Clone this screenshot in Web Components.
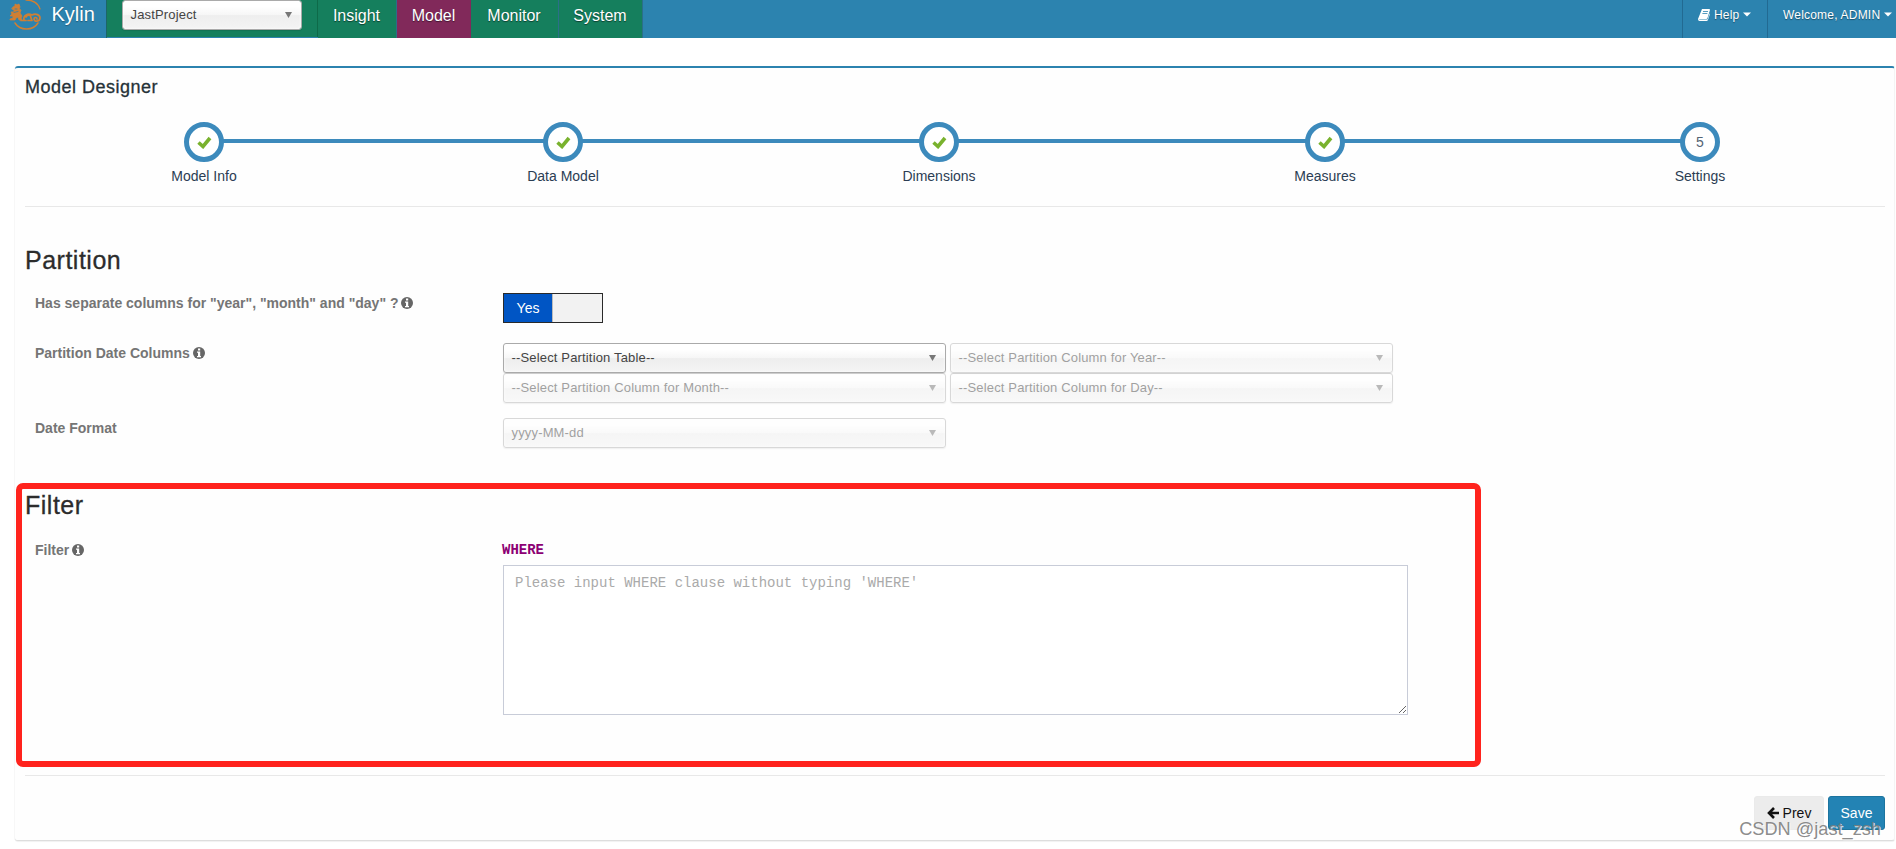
<!DOCTYPE html>
<html lang="en">
<head>
<meta charset="utf-8">
<title>Kylin</title>
<style>
body {
  margin: 0;
  background: #fff;
  font: 14px/20px "Liberation Sans", Arial, sans-serif;
  color: #2c2c2c;
}
</style>
</head>
<body>
<kylin-app></kylin-app>
<script>
const define = (name, html, setup) => {
  const template = document.createElement('template');
  template.innerHTML = html;
  customElements.define(name, class extends HTMLElement {
    constructor() {
      super();
      this.attachShadow({mode: 'open'});
      this.shadowRoot.appendChild(template.content.cloneNode(true));
    }
    connectedCallback() {
      if (setup) setup(this, this.shadowRoot);
    }
  });
};

define('kylin-logo', `
<style>
:host { display: block; width: 35px; height: 32px; }
svg { display: block; }
</style>
<svg width="35" height="32" viewBox="0 0 35 32" fill="none" stroke="#d07f33" stroke-linecap="round" stroke-linejoin="round">
  <path d="M18 0c7 0 12 3 14 9" stroke-width="1.300"/>
  <path d="M7 23c5 8 18 8 23 0" stroke-width="1.500"/>
  <path d="M5 7l2-1 0-2 2 1 2-1 1 3-1 2 2 1-1 3 2 3-1 2 1 2h-3l-1-3-2 1-1 2-5 0 0-1 3-1 0-2-3 0 2-2-1-2 3 0 0-2-2-1z" fill="#d07f33" stroke-width=".8"/>
  <path d="M6 12.500l4-1M7 9h2" stroke="#2c83af" stroke-width=".8"/>
  <path d="M13 20.500h5M16 20c-1-5 4-7 8-5 4-2 8 0 8 3 0 4-6 4-6 1 0-2 3-2 3 0M18 17c2-3 5-2 5 1l1 2.500h-4" stroke-width="1.700"/>
</svg>`);

define('kylin-select', `
<style>
:host {
  display: flex;
  align-items: center;
  box-sizing: border-box;
  height: 30px;
  padding: 0 7px 0 7.500px;
  border: 1px solid #aaa;
  border-radius: 3px;
  background: linear-gradient(#fff 20%, #f6f6f6 50%, #eee 52%, #f4f4f4 100%);
  background-clip: padding-box;
  box-shadow: 0 0 3px #fff inset, 0 1px 1px rgba(0, 0, 0, .1);
  font-size: 13px;
  letter-spacing: .16px;
  color: #444;
}
:host([disabled]) { opacity: .5; border-color: #b4b4b4; }
span { flex: 1; }
svg { display: block; margin-right: 1px; }
</style>
<span><slot></slot></span>
<svg width="9" height="8"><path d="M1 1h7L4.500 7z" fill="#777"/></svg>`);

define('nav-tab', `
<style>
:host {
  display: block;
  box-sizing: border-box;
  height: 38px;
  padding-right: 1px;
  background: #157f5d;
  border-right: 1px solid #2b6f88;
  color: #fff;
  font-size: 16px;
  line-height: 31px;
  text-align: center;
  text-shadow: 0 1px 1px rgba(0, 0, 0, .5);
}
:host([active]) { background: #81295a; border-color: #81295a; padding-right: 0; }
</style>
<slot></slot>`);

define('nav-menu', `
<style>
:host {
  display: flex;
  align-items: center;
  box-sizing: border-box;
  height: 38px;
  padding: 0 0 9px 15px;
  border-left: 1px solid #226a92;
  color: #fff;
  font-size: 12px;
  letter-spacing: .2px;
  white-space: nowrap;
  text-shadow: 0 1px 1px rgba(0, 0, 0, .4);
}
svg { margin-left: 4px; flex: none; }
</style>
<slot name="icon"></slot><slot></slot>
<svg width="8" height="5"><path d="M0 .500h8L4 4.500z" fill="#fff"/></svg>`);

define('kylin-navbar', `
<style>
:host { display: flex; height: 38px; background: #2c83af; }
.brand {
  display: flex;
  box-sizing: border-box;
  width: 107px;
  padding-left: 8px;
  gap: 8.500px;
  border-right: 1px solid #1c6666;
  color: #fff;
  font-size: 20px;
  line-height: 29px;
  text-shadow: 0 1px 1px rgba(0, 0, 0, .3);
}
.project {
  box-sizing: border-box;
  width: 211px;
  height: 37px;
  padding-left: 15px;
  background: #157f5d;
  border-right: 1px solid #0e6a49;
}
.project kylin-select { width: 180px; }
.spacer { flex: 1; }
.book { margin-right: 4px; display: block; }
</style>
<div class="brand"><kylin-logo></kylin-logo>Kylin</div>
<div class="project"><kylin-select>JastProject</kylin-select></div>
<nav-tab style="width: 79px">Insight</nav-tab>
<nav-tab style="width: 74px" active>Model</nav-tab>
<nav-tab style="width: 88px">Monitor</nav-tab>
<nav-tab style="width: 84px">System</nav-tab>
<div class="spacer"></div>
<nav-menu style="width: 85px"><svg class="book" slot="icon" width="12" height="12" viewBox="0 0 12 12"><path d="M4 0h7.200q1 .2.700 1.200L9.500 9q-.3.900-1.300.900H1.800q-.8 0-.6.700h7.300q1 0 1.300-.9L11.700 4l.2 1.200L10 10.800Q9.600 12 8.500 12H1.600Q0 11.800 0 10z" fill="#fff"/><path d="M5 2.500h5M4.400 4.500h5" stroke="#2c83af" stroke-width=".8"/></svg>Help</nav-menu>
<nav-menu style="width: 129px">Welcome, ADMIN</nav-menu>`);

define('wizard-step', `
<style>
:host { display: flex; flex-direction: column; align-items: center; width: 0; }
.circle {
  display: flex;
  align-items: center;
  justify-content: center;
  box-sizing: border-box;
  width: 40px;
  height: 40px;
  border: 5px solid #3c8abc;
  border-radius: 50%;
  background: #fff;
  color: #546474;
}
.label { margin-top: 4px; color: #2b3d53; white-space: nowrap; }
</style>
<div class="circle"></div>
<div class="label"><slot></slot></div>`, (el, root) => {
  const done = '<svg width="15" height="13" viewBox="0 0 15 13"><path d="M1.500 6.500L6 10.500L13 2" fill="none" stroke="#79b22e" stroke-width="3.600"/></svg>';
  root.querySelector('.circle').innerHTML = el.hasAttribute('done') ? done : el.getAttribute('number');
});

define('wizard-steps', `
<style>
:host { display: grid; grid-template-columns: 359px 376px 386px 375px 0; padding-left: 179px; height: 84px; }
div { display: flex; }
div:not(:last-child)::after {
  content: '';
  flex: 1;
  height: 4px;
  margin: 17px 19px 0;
  background: #3c8abc;
}
</style>
<div><wizard-step done>Model Info</wizard-step></div>
<div><wizard-step done>Data Model</wizard-step></div>
<div><wizard-step done>Dimensions</wizard-step></div>
<div><wizard-step done>Measures</wizard-step></div>
<div><wizard-step number="5">Settings</wizard-step></div>`);

define('form-row', `
<style>
:host { display: grid; grid-template-columns: 468px auto; padding-left: 10px; align-items: start; justify-content: start; }
label { display: flex; align-items: center; gap: 3px; font-weight: bold; color: #757575; }
svg { display: none; }
:host([info]) svg { display: block; }
</style>
<label><span></span><svg width="12" height="12" viewBox="0 0 12 12"><circle cx="6" cy="6" r="6" fill="#666"/><path d="M5 1.500h2.200v2H5zM4 4.500h3.200V9H8v1.300H4V9h1V5.800H4z" fill="#fff"/></svg></label>
<div><slot></slot></div>`, (el, root) => {
  root.querySelector('span').textContent = el.getAttribute('label');
});

define('yes-switch', `
<style>
:host { display: flex; box-sizing: border-box; width: 100px; height: 30px; border: 1px solid #2a2a2a; background: #f2f2f2; }
span { width: 48px; border-right: 1px solid #bbb; background: #0055c4; color: #fff; text-align: center; line-height: 28px; }
</style>
<span><slot></slot></span>`);

define('kylin-button', `
<style>
:host {
  display: flex;
  align-items: center;
  justify-content: center;
  gap: 4px;
  box-sizing: border-box;
  height: 34px;
  border: 1px solid #eaeaea;
  border-radius: 3px;
  background: #ececec;
  color: #111;
}
:host([primary]) { background: #2383b4; border-color: #1c749f; color: #fff; }
</style>
<slot></slot>`);

define('kylin-app', `
<style>
:host { display: block; position: relative; height: 849px; overflow: hidden; }
main {
  box-sizing: border-box;
  width: 1880px;
  height: 775px;
  margin: 28px 0 0 15px;
  padding: 0 9px 0 10px;
  border: solid #f4f4f4;
  border-width: 2px 1px 1px 0;
  border-top-color: #2c83af;
  border-bottom-color: #ddd;
  border-radius: 3px;
  background: #fefefe;
  box-shadow: 0 1px 1px rgba(0, 0, 0, .06), -1px 0 #f8f8f8;
}
section, h1 { box-sizing: border-box; }
h1, h2 { margin: 0; font-weight: normal; -webkit-text-stroke: .3px; }
h1 { padding-top: 8px; height: 54px; font-size: 18px; letter-spacing: .5px; line-height: 22px; color: #263238; }
h2 { font-size: 25px; letter-spacing: .5px; line-height: 30px; }
hr { margin: 0; border: 0; border-top: 1px solid #e8e8e8; }
.partition { padding-top: 38px; height: 247px; }
.partition form-row:nth-of-type(1) { margin-top: 18px; height: 50px; }
.partition form-row:nth-of-type(2) { height: 75px; }
.selects { display: grid; grid-template-columns: 443px 443px; column-gap: 4px; }
.filter { padding-top: 36px; height: 321px; }
.filter form-row { margin-top: 20px; }
.where { margin: 0 0 5px -1px; color: #8c0073; font: bold 14px/20px "Liberation Mono", monospace; }
textarea {
  display: block;
  box-sizing: border-box;
  width: 905px;
  height: 150px;
  padding: 7px 11px;
  border: 1px solid #c8ccd8;
  background: #fff;
  font: 14px/20px "Liberation Mono", monospace;
}
textarea::placeholder { color: #aaa; }
.actions { display: flex; justify-content: flex-end; gap: 4px; padding-top: 20px; }
.frame {
  position: absolute;
  left: 16px;
  top: 483px;
  box-sizing: border-box;
  width: 1465px;
  height: 284px;
  border: 6px solid #ff231d;
  border-radius: 7px;
  pointer-events: none;
}
.mark {
  position: absolute;
  right: 15px;
  bottom: 8px;
  font-size: 18.200px;
  line-height: 24px;
  color: rgba(125, 125, 125, .9);
  text-shadow: 1px 1px rgba(255, 255, 255, .8);
}
</style>
<kylin-navbar></kylin-navbar>
<main>
  <h1>Model Designer</h1>
  <wizard-steps></wizard-steps>
  <hr>
  <section class="partition">
    <h2>Partition</h2>
    <form-row info label='Has separate columns for "year", "month" and "day" ?'><yes-switch>Yes</yes-switch></form-row>
    <form-row info label="Partition Date Columns">
      <div class="selects">
        <kylin-select>--Select Partition Table--</kylin-select>
        <kylin-select disabled>--Select Partition Column for Year--</kylin-select>
        <kylin-select disabled>--Select Partition Column for Month--</kylin-select>
        <kylin-select disabled>--Select Partition Column for Day--</kylin-select>
      </div>
    </form-row>
    <form-row label="Date Format"><div class="selects"><kylin-select disabled>yyyy-MM-dd</kylin-select></div></form-row>
  </section>
  <section class="filter">
    <h2>Filter</h2>
    <form-row info label="Filter">
      <div class="where">WHERE</div>
      <textarea placeholder="Please input WHERE clause without typing 'WHERE'"></textarea>
    </form-row>
  </section>
  <hr>
  <div class="actions">
    <kylin-button style="width: 70px"><svg width="12" height="12" viewBox="0 0 12 12"><path d="M7 1L2 6l5 5M2 6h10" fill="none" stroke="#111" stroke-width="2.600"/></svg>Prev</kylin-button>
    <kylin-button primary style="width: 57px">Save</kylin-button>
  </div>
</main>
<div class="frame"></div>
<div class="mark">CSDN @jast_zsh</div>`);
</script>
</body>
</html>
